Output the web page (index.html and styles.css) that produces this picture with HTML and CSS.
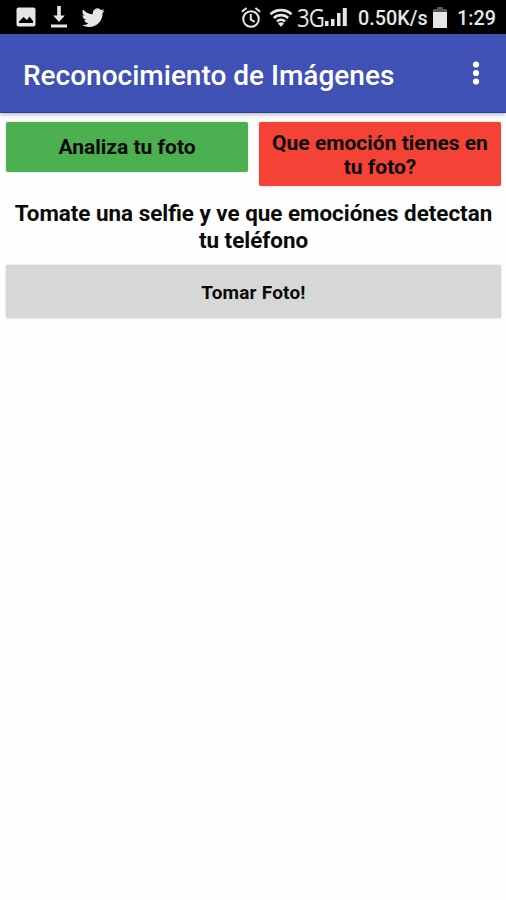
FILE: index.html
```
<!DOCTYPE html>
<html lang="es">
<head>
  <meta charset="UTF-8">
  <meta name="viewport" content="width=device-width, initial-scale=1.0">
  <title>Reconocimiento de Imágenes</title>
  <link rel="stylesheet" href="styles.css">
</head>
<body>
  <div class="status-bar">
    <div class="notifications">
      <svg class="icon-image" width="20" height="20" viewBox="0 0 20 20">
        <path fill-rule="evenodd" d="M2.5 0.5h15a2 2 0 0 1 2 2v15a2 2 0 0 1-2 2h-15a2 2 0 0 1-2-2v-15a2 2 0 0 1 2-2zM3 16h14v-2l-3.5-4.5-2.5 3.5-3.5-3L3 14.5z"/>
      </svg>
      <svg class="icon-download" width="16" height="22" viewBox="0 0 16 22">
        <path d="M6.2 0h3.6v9.5h4L8 16 2.2 9.5h4zM0 18.5h16v3H0z"/>
      </svg>
      <svg class="icon-bird" width="23" height="23" viewBox="0 0 24 24">
        <path d="M23.6 4.9a9.7 9.7 0 0 1-2.8.8 4.9 4.9 0 0 0 2.1-2.7 9.8 9.8 0 0 1-3.1 1.2 4.9 4.9 0 0 0-8.4 4.5A13.9 13.9 0 0 1 1.3 3.6a4.9 4.9 0 0 0 1.5 6.5 4.9 4.9 0 0 1-2.2-.6 4.9 4.9 0 0 0 3.9 4.9 4.9 4.9 0 0 1-2.2.1 4.9 4.9 0 0 0 4.6 3.4A9.8 9.8 0 0 1 0 19.9 13.9 13.9 0 0 0 7.5 22c9.1 0 14.3-7.7 13.9-14.6a10 10 0 0 0 2.2-2.5z"/>
      </svg>
    </div>
    <div class="system">
      <svg class="icon-alarm" width="20" height="21" viewBox="0 0 20 21">
        <g fill="none" stroke="#e6e6e6" stroke-width="2">
          <circle cx="10" cy="12" r="7.8"/>
          <path d="M9.8 7v5.5l3.8 2.4M0.8 4.8L5.6 1M14.4 1l4.8 3.8"/>
        </g>
      </svg>
      <svg class="icon-wifi" width="24" height="19" viewBox="0 0 24 19">
        <g fill="none" stroke="#e6e6e6" stroke-width="2.7">
          <path d="M1.5 6.2a15.5 15.5 0 0 1 21 0M4.9 9.9a10.4 10.4 0 0 1 14.2 0M8 13.4a6 6 0 0 1 8 0"/>
        </g>
        <path d="M12 18.8l-3-3.2a4.4 4.4 0 0 1 6 0z"/>
      </svg>
      <span class="network">3G</span>
      <svg class="icon-signal" width="22" height="20" viewBox="0 0 22 20">
        <path d="M0 14h3.5v5H0zM6 12h3.5v7H6zM12 6h3.5v13H12zM17.8 1h4v18h-4z"/>
      </svg>
      <span class="speed">0.50K/s</span>
      <svg class="icon-battery" width="14" height="21" viewBox="0 0 14 21">
        <path fill="#555" d="M4 0h6v2h4v4H0V2h4z"/>
        <path d="M0 5h14v16H0z"/>
      </svg>
      <span class="clock">1:29</span>
    </div>
  </div>

  <header class="app-bar">
    <h1>Reconocimiento de Imágenes</h1>
    <svg class="icon-menu" width="8" height="24" viewBox="0 0 8 24">
      <circle cx="4" cy="3.5" r="3.1"/>
      <circle cx="4" cy="12" r="3.1"/>
      <circle cx="4" cy="20.5" r="3.1"/>
    </svg>
  </header>

  <main>
    <div class="tabs">
      <button class="btn btn-green">Analiza tu foto</button>
      <button class="btn btn-red">Que emoción tienes en<br>tu foto?</button>
    </div>
    <p class="message">Tomate una selfie y ve que emociónes detectan<br>tu teléfono</p>
    <button class="btn btn-photo">Tomar Foto!</button>
  </main>
</body>
</html>
```
FILE: styles.css
```
* {
  margin: 0;
  padding: 0;
  box-sizing: border-box;
}
body {
  background: #fefefe;
  font-family: Roboto, sans-serif;
  color: #0a0a0a;
  min-height: 100vh;
}

/* Status bar */
.status-bar {
  display: flex;
  justify-content: space-between;
  height: 34px;
  padding: 0 10px 0 16px;
  background: #000;
  color: #e6e6e6;
  fill: #e6e6e6;
}
.notifications, .system {
  display: flex;
  align-items: center;
}
.icon-download {
  margin-left: 15px;
}
.icon-bird {
  margin-left: 15px;
}
.icon-wifi {
  margin: 1px 4px 0 8px;
}
.network {
  width: 36px;
  margin-right: -8px;
  font-family: "Open Sans", sans-serif;
  font-size: 26px;
  letter-spacing: -1px;
  line-height: 32px;
  transform: scaleX(0.85);
  transform-origin: left;
}
.icon-signal {
  margin-right: 11px;
}
.speed, .clock {
  font-size: 19.8px;
  font-weight: 500;
  line-height: 34px;
  margin-top: 3px;
  white-space: nowrap;
}
.speed {
  width: 75px;
}
.clock {
  width: 39px;
  margin-left: 10px;
}

/* App bar */
.app-bar {
  display: flex;
  align-items: center;
  justify-content: space-between;
  height: 79px;
  padding: 0 26px 0 23px;
  background: #3f51b5;
  border-bottom: 1px solid #283da5;
  box-shadow: 0 2px 4px rgba(0,0,0,0.25);
  color: #fff;
  fill: #fff;
}
.app-bar h1 {
  font-size: 28px;
  font-weight: 500;
  line-height: 32px;
  margin-top: 5px;
  white-space: nowrap;
}

main {
  padding: 9px 5px 0 6px;
}
.tabs {
  display: flex;
  align-items: flex-start;
  gap: 11px;
}
.btn {
  display: block;
  border: none;
  border-radius: 2px;
  box-shadow: 0 0 2px rgba(0,0,0,0.25);
  font-family: inherit;
  font-weight: 500;
  color: #0a0a0a;
  white-space: nowrap;
}
.btn-green, .btn-red {
  flex: 1;
  font-size: 21px;
  font-weight: 700;
  line-height: 24px;
}
.btn-green {
  height: 50px;
  background: #4caf50;
}
.btn-red {
  height: 64px;
  padding-top: 1px;
  background: #f44336;
}
.message {
  margin: 14px 0 11px;
  font-size: 22.4px;
  font-weight: 700;
  line-height: 27px;
  text-align: center;
  white-space: nowrap;
}
.btn-photo {
  width: 100%;
  height: 53px;
  padding-top: 2px;
  background: #d6d7d7;
  font-size: 19px;
  font-weight: 700;
  letter-spacing: 0.2px;
}
```
